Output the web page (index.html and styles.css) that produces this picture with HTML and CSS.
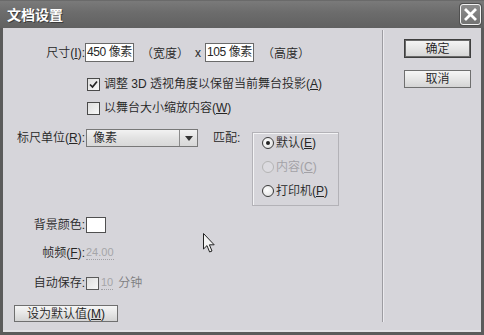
FILE: index.html
```html
<!DOCTYPE html>
<html lang="zh-CN">
<head>
<meta charset="utf-8">
<title>文档设置</title>
<link rel="stylesheet" href="styles.css">
</head>
<body>
<div class="window">
  <div class="titlebar">
    <span class="title">文档设置</span>
    <span class="close"><svg width="19" height="19" viewBox="0 0 19 19"><path d="M5 5 L14 14 M14 5 L5 14" stroke="#fff" stroke-width="2.8" stroke-linecap="square"/></svg></span>
  </div>
  <div class="frame">
    <div class="main">
      <div class="row row-size">
        <span class="label">尺寸(<u>I</u>):</span>
        <span class="input">450 像素</span>
        <span class="paren">（宽度）</span>
        <span class="times">x</span>
        <span class="input input-2">105 像素</span>
        <span class="paren paren-2">（高度）</span>
      </div>
      <div class="row check-row check-row-1">
        <span class="checkbox"><svg width="11" height="11" viewBox="0 0 11 11"><path d="M2 5.5 L4.5 8 L9 2.5" fill="none" stroke="#222" stroke-width="1.7"/></svg></span>
        <span class="check-text">调整 3D 透视角度以保留当前舞台投影(<u>A</u>)</span>
      </div>
      <div class="row check-row">
        <span class="checkbox"></span>
        <span class="check-text">以舞台大小缩放内容(<u>W</u>)</span>
      </div>
      <div class="row row-ruler">
        <span class="label label-tall">标尺单位(<u>R</u>):</span>
        <span class="select"><span class="select-value">像素</span><span class="select-arrow"><svg width="8" height="5" viewBox="0 0 8 5"><path d="M0 0 H8 L4 5 Z" fill="#333"/></svg></span></span>
        <span class="match-label">匹配:</span>
        <div class="groupbox">
          <div class="radio-row"><span class="radio checked"></span><span>默认(<u>E</u>)</span></div>
          <div class="radio-row disabled"><span class="radio"></span><span>内容(<u>C</u>)</span></div>
          <div class="radio-row"><span class="radio"></span><span>打印机(<u>P</u>)</span></div>
        </div>
      </div>
      <div class="row row-color">
        <span class="label">背景颜色:</span>
        <span class="swatch"></span>
      </div>
      <div class="row row-fps">
        <span class="label">帧频(<u>F</u>):</span>
        <span class="hot hot-fps">24.00</span>
      </div>
      <div class="row row-auto">
        <span class="label">自动保存:</span>
        <span class="checkbox checkbox-auto"></span>
        <span class="hot hot-min">10</span>
        <span class="unit">分钟</span>
      </div>
      <div class="row row-default">
        <span class="button button-default">设为默认值(<u>M</u>)</span>
      </div>
    </div>
    <div class="sep"></div>
    <div class="side">
      <span class="button button-primary">确定</span>
      <span class="button">取消</span>
    </div>
  </div>
  <svg class="cursor" width="13" height="21" viewBox="0 0 13 21"><path d="M0.5 0.5 L0.5 16 L4 12.6 L6.6 19 L9 18 L6.4 11.8 L11.2 11.8 Z" fill="#f4f4f4" stroke="#222" stroke-width="1" stroke-linejoin="miter"/></svg>
</div>
</body>
</html>
```
FILE: styles.css
```css
html, body {
  margin: 0;
  padding: 0;
  background: #d6d5da;
}

.window {
  position: relative;
  width: 484px;
  height: 335px;
  display: flex;
  flex-direction: column;
  font-family: "Liberation Sans", "Noto Sans CJK SC", sans-serif;
  font-size: 12px;
  font-weight: 350;
  line-height: 16px;
  color: #262626;
}

u {
  text-decoration: underline;
  text-underline-offset: 1px;
}

.titlebar {
  height: 28px;
  flex: none;
  display: flex;
  align-items: center;
  justify-content: space-between;
  padding: 0 3px 0 7px;
  background: linear-gradient(#5a5a5a 0, #7a7a7a 1px, #6c6c6c 45%, #616161 100%);
}

.title {
  font-family: "Noto Sans CJK SC", sans-serif;
  font-weight: bold;
  font-size: 14px;
  line-height: 16px;
  color: #ffffff;
  text-shadow: 1px 1px 0 #3c3c3c;
}

.close {
  width: 19px;
  height: 19px;
  border: 1px solid #f2f2f2;
  border-radius: 3px;
  background: linear-gradient(#8c8c8c, #737373);
  box-shadow: 0 0 0 1px #505050;
  display: flex;
}

.frame {
  flex: 1;
  display: flex;
  background: #d6d5da;
  border: 3px solid #5b5b5b;
  border-top: 0;
  box-shadow: inset 0 -2px 0 #e2e1e5;
}

.main {
  width: 379px;
  flex: none;
  padding-top: 15px;
}

.sep {
  width: 1px;
  flex: none;
  background: #9d9ca1;
  box-shadow: 1px 0 0 #ebeaee;
  margin: 2px 0 10px;
}

.side {
  flex: 1;
  display: flex;
  flex-direction: column;
  align-items: flex-start;
  gap: 12px;
  padding: 11px 0 0 21px;
}

.row {
  display: flex;
  align-items: center;
}

.label {
  width: 82px;
  flex: none;
  text-align: right;
  white-space: nowrap;
}

.row-size {
  height: 19px;
}

.input {
  width: 49px;
  height: 19px;
  box-sizing: border-box;
  border: 1px solid #6a6a6a;
  background: #ffffff;
  padding-left: 1px;
  letter-spacing: -0.4px;
  line-height: 17px;
  white-space: nowrap;
  overflow: hidden;
}

.input-2 {
  margin-left: 4px;
}

.paren {
  font-family: "Noto Sans CJK SC", sans-serif;
  margin-left: 7px;
}

.paren-2 {
  margin-left: 8px;
}

.times {
  margin-left: 6px;
}

.check-row {
  height: 24px;
  padding-left: 84px;
}

.check-row-1 {
  margin-top: 10px;
}

.checkbox {
  width: 13px;
  height: 13px;
  box-sizing: border-box;
  border: 1px solid #4a4a4a;
  background: linear-gradient(135deg, #dedede, #f8f8f8);
  display: flex;
  align-items: center;
  justify-content: center;
  flex: none;
}

.check-text {
  margin-left: 4px;
  white-space: nowrap;
}

.row-ruler {
  align-items: flex-start;
  margin-top: 9px;
}

.label-tall {
  line-height: 18px;
}

.select {
  width: 112px;
  height: 18px;
  box-sizing: border-box;
  margin-left: 1px;
  border: 1px solid #787878;
  background: linear-gradient(#f2f2f2, #e2e2e2 50%, #d8d8d8);
  display: flex;
  align-items: stretch;
}

.select-value {
  flex: 1;
  padding-left: 6px;
  line-height: 16px;
}

.select-arrow {
  width: 17px;
  border-left: 1px solid #8a8a8a;
  display: flex;
  align-items: center;
  justify-content: center;
}

.match-label {
  width: 39px;
  margin-left: 15px;
  line-height: 18px;
}

.groupbox {
  width: 87px;
  height: 74px;
  box-sizing: border-box;
  margin-top: 3px;
  border: 1px solid #b3b2b7;
  box-shadow: inset 1px 1px 0 #f3f3f5;
  padding: 0 0 0 9px;
  display: flex;
  flex-direction: column;
  gap: 4px;
}

.radio-row {
  height: 20px;
  display: flex;
  align-items: center;
  gap: 2px;
  white-space: nowrap;
}

.radio {
  width: 12px;
  height: 12px;
  box-sizing: border-box;
  border: 1px solid #3a3a3a;
  border-radius: 50%;
  background: radial-gradient(circle at 40% 40%, #ffffff, #dcdcdc);
  display: flex;
  align-items: center;
  justify-content: center;
}

.radio.checked::after {
  content: "";
  width: 4px;
  height: 4px;
  border-radius: 50%;
  background: #222;
}

.radio-row.disabled {
  color: #a2a1a6;
}

.radio-row.disabled .radio {
  border-color: #b4b4b4;
  background: #dcdbe0;
}

.row-color {
  height: 16px;
  margin-top: 11px;
}

.swatch {
  width: 20px;
  height: 16px;
  box-sizing: border-box;
  margin-left: 1px;
  border: 1px solid #505050;
  background: #ffffff;
}

.row-fps {
  height: 16px;
  margin-top: 12px;
}

.hot {
  font-size: 11px;
  line-height: 13px;
  color: #a5a5a8;
  border-bottom: 1px dotted #a0a0a4;
}

.hot-fps {
  margin-left: 1px;
}

.row-auto {
  height: 16px;
  margin-top: 14px;
}

.checkbox-auto {
  margin-left: 1px;
  border-color: #5a5a5a;
}

.hot-min {
  margin-left: 2px;
}

.unit {
  margin-left: 5px;
  color: #7d7d80;
}

.row-default {
  margin-top: 14px;
  padding-left: 11px;
}

.button {
  height: 18px;
  box-sizing: border-box;
  width: 67px;
  border: 1px solid #6f6f6f;
  background: linear-gradient(#f6f6f6, #e6e6e6 50%, #d4d4d4);
  display: flex;
  align-items: center;
  justify-content: center;
  white-space: nowrap;
  color: #222;
}

.button-default {
  width: 104px;
  height: 17px;
}

.button-primary {
  height: 19px;
  border-color: #3e3e3e;
  box-shadow: inset 0 0 0 1px #6a6a6a;
}

.cursor {
  position: absolute;
  left: 203px;
  top: 233px;
}
```
